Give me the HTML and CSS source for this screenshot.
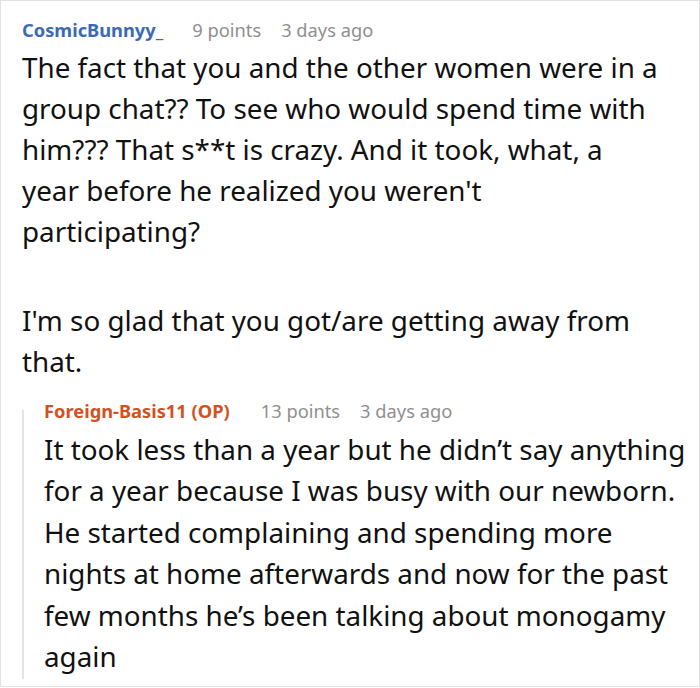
FILE: index.html
```html
<!DOCTYPE html>
<html>
<head>
<meta charset="utf-8">
<link rel="stylesheet" href="styles.css">
</head>
<body>
<div class="thread">
  <div class="comment">
    <div class="meta">
      <span class="user">CosmicBunnyy_</span>
      <span class="points">9 points</span>
      <span class="time">3 days ago</span>
    </div>
    <div class="text">
      <p>The fact that you and the other women were in a group chat?? To see who would spend time with him??? That s**t is crazy. And it took, what, a year before he realized you weren't participating?</p>
      <p>I'm so glad that you got/are getting away from that.</p>
    </div>
    <div class="reply">
      <div class="meta">
        <span class="user op">Foreign-Basis11 (OP)</span>
        <span class="points">13 points</span>
        <span class="time">3 days ago</span>
      </div>
      <div class="text">
        <p>It took less than a year but he didn’t say anything for a year because I was busy with our newborn. He started complaining and spending more nights at home afterwards and now for the past few months he’s been talking about monogamy again</p>
      </div>
    </div>
  </div>
</div>
</body>
</html>
```

FILE: styles.css
```css
html, body {
  margin: 0;
  padding: 0;
  background: #fff;
}
.thread {
  width: 700px;
  height: 687px;
  box-sizing: border-box;
  border: 1px solid #e2e2e2;
  overflow: hidden;
  font-family: "Noto Sans", "Open Sans", sans-serif;
  color: #111;
}
.comment {
  padding: 17px 11px 0 21px;
}
.meta {
  display: flex;
  align-items: baseline;
  font-size: 18.3px;
  line-height: 24px;
}
.user {
  font-weight: 700;
  color: #3b6ab4;
  margin-right: 29px;
}
.user.op {
  color: #d2521f;
  margin-right: 31px;
}
.points, .time {
  color: #8f8f8f;
}
.points {
  margin-right: 20px;
}
.text {
  font-size: 27.8px;
  line-height: 41.4px;
}
.text p {
  margin: 0;
}
.text p + p {
  margin-top: 48px;
}
.comment > .text {
  margin-top: 5px;
  margin-right: 25px;
}
.comment > .text p {
  line-height: 41px;
}
.reply {
  margin-top: 17px;
  padding-left: 22px;
  padding-bottom: 2px;
  background: linear-gradient(#e4e4e4, #e4e4e4) no-repeat 0 11px / 2px calc(100% - 11px);
}
.reply .text {
  margin-top: 6px;
}
```
